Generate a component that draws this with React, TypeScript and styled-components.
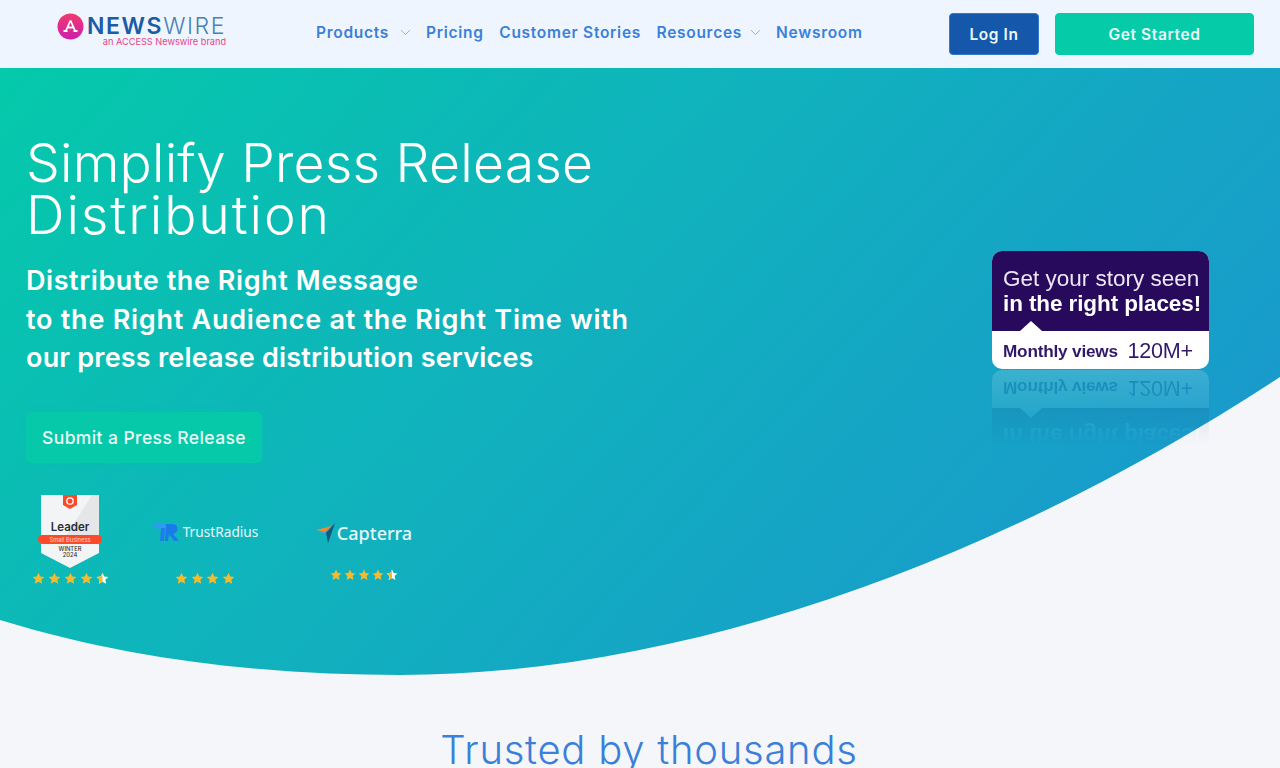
import React from "react";
import styled, { createGlobalStyle } from "styled-components";
import { ChevronDown } from "lucide-react";

const Global = createGlobalStyle`
  html, body { margin: 0; padding: 0; background: #f5f6fa; overflow: hidden; }
  body { font-family: "Inter", "Liberation Sans", sans-serif; }
  * { box-sizing: border-box; }
`;

const Page = styled.div`
  width: 1280px;
  height: 768px;
  overflow: hidden;
  display: flex;
  flex-direction: column;
`;

const Header = styled.header`
  height: 68px;
  flex: none;
  background: #eef5ff;
  display: flex;
  align-items: center;
  padding: 0 26px 0 57px;
`;

const Logo = styled.div`
  width: 170px;
  height: 36px;
  display: flex;
  gap: 2px;
  margin-bottom: 8px;
  flex: none;
`;

const LogoWords = styled.div`
  display: flex;
  flex-direction: column;
  align-items: flex-end;
  padding-top: 3px;
`;

const LogoName = styled.div`
  font-size: 23px;
  line-height: 22px;
  letter-spacing: 1.6px;
  color: #1c5ba6;
  font-weight: 600;
  white-space: nowrap;
  span { font-weight: 300; color: #4a7fb8; }
`;

const LogoTag = styled.div`
  font-size: 9.2px;
  line-height: 10px;
  color: #e8428a;
  white-space: nowrap;
`;

const Nav = styled.nav`
  display: flex;
  align-items: center;
  margin-left: 89px;
  margin-bottom: 3px;
`;

const NavItem = styled.a<{ $gap?: number }>`
  display: flex;
  align-items: center;
  font-size: 15.5px;
  font-weight: 600;
  letter-spacing: 0.72px;
  color: #3a80d8;
  margin-right: ${(p) => p.$gap ?? 15.5}px;
  white-space: nowrap;
`;

const Chevron = styled(ChevronDown)<{ $ml: number }>`
  margin-left: ${(p) => p.$ml}px;
  color: #7da6dc;
`;

const Actions = styled.div`
  margin-left: auto;
  display: flex;
  gap: 16px;
`;

const HeaderButton = styled.button<{ $width: number; $bg: string; $border: string }>`
  width: ${(p) => p.$width}px;
  height: 42px;
  border-radius: 4px;
  border: 1px solid ${(p) => p.$border};
  background: ${(p) => p.$bg};
  color: #eaf7f6;
  font-family: inherit;
  font-size: 15.5px;
  font-weight: 600;
  letter-spacing: 0.6px;
  padding: 0;
`;

const Hero = styled.section`
  position: relative;
  height: 607px;
  flex: none;
  background: linear-gradient(133deg, #04c9aa 0%, #10b2bd 42%, #1a97cd 92%);
  overflow: hidden;
  display: flex;
  justify-content: space-between;
  padding: 69px 71px 0 26px;
`;

const Curve = styled.svg`
  position: absolute;
  left: 0;
  top: 0;
`;

const Left = styled.div`
  position: relative;
  display: flex;
  flex-direction: column;
  align-items: flex-start;
`;

const Title = styled.h1`
  margin: 0;
  font-size: 53.5px;
  line-height: 52px;
  font-weight: 300;
  color: #fff;
  width: 640px;
`;

const TitleLine = styled.span<{ $ls: number }>`
  display: block;
  letter-spacing: ${(p) => p.$ls}px;
`;

const Sub = styled.p`
  margin: 21px 0 0;
  font-size: 27px;
  line-height: 38.5px;
  font-weight: 600;
  color: #fff;
  white-space: nowrap;
`;

const SubLine = styled.span<{ $ls: number }>`
  display: block;
  letter-spacing: ${(p) => p.$ls}px;
`;

const Cta = styled.button`
  margin-top: 34px;
  width: 236px;
  height: 51px;
  border: none;
  border-radius: 5px;
  background: #05c9a8;
  box-shadow: 0 0 6px rgba(0, 200, 170, 0.35);
  color: #eafaf6;
  font-family: inherit;
  font-size: 17.5px;
  font-weight: 500;
  letter-spacing: 0.4px;
  padding: 0;
`;

const Badges = styled.div`
  display: flex;
  margin-top: 32px;
  align-items: flex-start;
`;

const Badge = styled.div<{ $w: number; $ml: number }>`
  width: ${(p) => p.$w}px;
  margin-left: ${(p) => p.$ml}px;
  display: flex;
  flex-direction: column;
  align-items: center;
`;

const BrandRow = styled.div<{ $mt: number }>`
  display: flex;
  align-items: center;
  margin-top: ${(p) => p.$mt}px;
  height: 24px;
`;

const BrandText = styled.span<{ $size: number; $weight: number }>`
  font-family: "Noto Sans", sans-serif;
  font-size: ${(p) => p.$size}px;
  font-weight: ${(p) => p.$weight};
  color: #e6f7fb;
  white-space: nowrap;
`;

const StarRow = styled.div<{ $mt: number }>`
  display: flex;
  margin-top: ${(p) => p.$mt}px;
  line-height: 0;
`;

const PromoWrap = styled.div`
  margin-top: 114px;
  width: 217px;
  height: 118px;
  position: relative;
`;

const PromoCard = styled.div`
  width: 217px;
  height: 118px;
  border-radius: 10px;
  background: #fff;
  display: flex;
  flex-direction: column;
  font-family: "Liberation Sans", Arial, sans-serif;
  -webkit-box-reflect: below 1px linear-gradient(transparent 36%, rgba(255, 255, 255, 0.16));
`;

const PromoTop = styled.div`
  position: relative;
  height: 80px;
  background: #280a5c;
  border-radius: 10px 10px 0 0;
  color: #ebe7f4;
  padding: 15px 0 0 11px;
  font-size: 22.5px;
  line-height: 25px;
  white-space: nowrap;
  b { color: #fff; letter-spacing: -0.1px; }
  &::after {
    content: "";
    position: absolute;
    left: 28px;
    bottom: 0;
    border: 11.5px solid transparent;
    border-top: 0;
    border-bottom-width: 10px;
    border-bottom-color: #fff;
  }
`;

const PromoBottom = styled.div`
  flex: 1;
  display: flex;
  align-items: center;
  padding: 2px 0 0 11px;
  color: #32186a;
  white-space: nowrap;
  b { font-size: 17.2px; letter-spacing: -0.2px; }
  span { font-size: 21.6px; margin-left: 9.5px; letter-spacing: -0.2px; }
`;

const Trusted = styled.h2`
  margin: 0;
  padding: 50px 0 0 18px;
  text-align: center;
  font-size: 40px;
  line-height: 50px;
  font-weight: 300;
  color: #3a80d8;
  letter-spacing: 0.75px;
  flex: none;
`;

const STAR = "M6 .6l1.6 3.5 3.8.4-2.8 2.6.8 3.8L6 9l-3.4 1.9.8-3.8L.6 4.500l3.800-.4z";

function Stars({ count, half, size, gap }: { count: number; half?: boolean; size: number; gap: number }) {
  const total = count + (half ? 1 : 0);
  return (
    <>
      {Array.from({ length: total }).map((_, i) => {
        const isHalf = half && i === count;
        return (
          <svg key={i} width={size} height={size} viewBox="0 0 12 12" style={{ marginRight: i === total - 1 ? 0 : gap }}>
            <path d={STAR} fill={isHalf ? "#fff" : "#f6bb2c"} />
            {isHalf && <path d="M6 .6V9L2.600 10.900l.8-3.800L.6 4.500l3.800-.4z" fill="#f6bb2c" />}
          </svg>
        );
      })}
    </>
  );
}

function G2Badge() {
  return (
    <svg width="66" height="74" viewBox="-3 0 66 74" style={{ display: "block" }}>
      <path d="M1 0h58v58L30 73 1 58z" fill="#f3f4f5" />
      <path d="M59 0v44L24 44 52 0z" fill="#e4e6e8" />
      <path d="M23 0h14v10l-7 4-7-4z" fill="#fb4a2a" />
      <circle cx="30" cy="6" r="3.200" fill="none" stroke="#fff" strokeWidth="1.300" />
      <text x="30" y="36" textAnchor="middle" fontFamily="Inter, sans-serif" fontSize="11.500" fontWeight="600" fill="#2a2e36">Leader</text>
      <rect x="-2" y="40" width="64" height="9" rx="4.500" fill="#fb4a2a" />
      <text x="30" y="46.800" textAnchor="middle" fontFamily="Inter, sans-serif" fontSize="5.800" fill="#ffd9cf">Small Business</text>
      <text x="30" y="55.500" textAnchor="middle" fontFamily="Inter, sans-serif" fontSize="5.800" fontWeight="500" fill="#333">WINTER</text>
      <text x="30" y="62" textAnchor="middle" fontFamily="Inter, sans-serif" fontSize="5.800" fontWeight="500" fill="#333">2024</text>
    </svg>
  );
}

function TrustMark() {
  return (
    <svg width="28" height="20" viewBox="0 0 28 20" style={{ marginRight: 3 }}>
      <path d="M0 1c4 0 9 0 14 1l-2 3H10L9 7C5 7 2 5 0 1z" fill="#2f9af5" />
      <path d="M9 6h4l-1 13H8z" fill="#1e7fe8" />
      <path d="M14 2h7c6 0 6 9 0 10l6 7h-5l-5-7-1 7h-3z" fill="#1b7aea" />
    </svg>
  );
}

function CapterraMark() {
  return (
    <svg width="22" height="22" viewBox="0 0 22 22">
      <path d="M1 8L17 4 10 10z" fill="#f58a2e" />
      <path d="M1 8L10 10l1 2z" fill="#4aa3dc" />
      <path d="M20 1L13 21l-2-10z" fill="#10587f" />
    </svg>
  );
}

export default function App() {
  return (
    <Page>
      <Global />
      <Header>
        <Logo>
          <svg width="28" height="28" viewBox="0 0 28 28" style={{ flex: "none", marginTop: 1 }}>
            <defs>
              <linearGradient id="lg" x1="0" y1="0" x2="0" y2="1">
                <stop offset="0" stopColor="#f23a6e" />
                <stop offset="1" stopColor="#cb1fb0" />
              </linearGradient>
            </defs>
            <circle cx="13.500" cy="13.500" r="13" fill="url(#lg)" />
            <path d="M13.500 7.500l4.500 10M13.500 7.500l-4.500 10M10 14.500h7M6.500 18h4M16.500 18h4" stroke="#fff" strokeWidth="1.800" fill="none" />
          </svg>
          <LogoWords>
            <LogoName>
              NEWS<span>WIRE</span>
            </LogoName>
            <LogoTag>an ACCESS Newswire brand</LogoTag>
          </LogoWords>
        </Logo>
        <Nav>
          <NavItem $gap={12.5}>
            Products
            <Chevron $ml={7.5} size={17} strokeWidth={1.2} />
          </NavItem>
          <NavItem>Pricing</NavItem>
          <NavItem>Customer Stories</NavItem>
          <NavItem $gap={12.5}>
            Resources
            <Chevron $ml={4.5} size={17} strokeWidth={1.2} />
          </NavItem>
          <NavItem $gap={0}>Newsroom</NavItem>
        </Nav>
        <Actions>
          <HeaderButton $width={90} $bg="#1457ab" $border="#3278d0">Log In</HeaderButton>
          <HeaderButton $width={199} $bg="#05cba9" $border="#05cba9">Get Started</HeaderButton>
        </Actions>
      </Header>
      <Hero>
        <Curve width="1280" height="607" viewBox="0 0 1280 607">
          <path d="M0 552 C 140 595, 280 607, 400 607 C 700 607, 1020 480, 1280 309 V607 H0 Z" fill="#f5f6fa" />
        </Curve>
        <Left>
          <Title>
            <TitleLine $ls={0.2}>Simplify Press Release</TitleLine>
            <TitleLine $ls={1.9}>Distribution</TitleLine>
          </Title>
          <Sub>
            <SubLine $ls={0.57}>Distribute the Right Message</SubLine>
            <SubLine $ls={0.75}>to the Right Audience at the Right Time with</SubLine>
            <SubLine $ls={0.2}>our press release distribution services</SubLine>
          </Sub>
          <Cta>Submit a Press Release</Cta>
          <Badges>
            <Badge $w={76} $ml={6}>
              <G2Badge />
              <StarRow $mt={3}>
                <Stars count={4} half size={13} gap={3} />
              </StarRow>
            </Badge>
            <Badge $w={106} $ml={44}>
              <BrandRow $mt={25}>
                <TrustMark />
                <BrandText $size={13.700} $weight={400}>TrustRadius</BrandText>
              </BrandRow>
              <StarRow $mt={28}>
                <Stars count={4} size={13} gap={2.500} />
              </StarRow>
            </Badge>
            <Badge $w={97} $ml={57}>
              <BrandRow $mt={26}>
                <CapterraMark />
                <BrandText $size={18} $weight={500}>Capterra</BrandText>
              </BrandRow>
              <StarRow $mt={24}>
                <Stars count={4} half size={12} gap={2} />
              </StarRow>
            </Badge>
          </Badges>
        </Left>
        <PromoWrap>
          <PromoCard>
            <PromoTop>
              Get your story seen
              <br />
              <b>in the right places!</b>
            </PromoTop>
            <PromoBottom>
              <b>Monthly views</b>
              <span>120M+</span>
            </PromoBottom>
          </PromoCard>
        </PromoWrap>
      </Hero>
      <Trusted>Trusted by thousands</Trusted>
    </Page>
  );
}
